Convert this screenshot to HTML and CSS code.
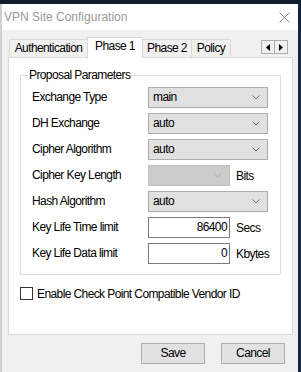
FILE: index.html
```html
<!DOCTYPE html>
<html>
<head>
<meta charset="utf-8">
<link rel="stylesheet" href="styles.css">
</head>
<body>
<div class="window">
  <div class="titlebar">
    <span class="title">VPN Site Configuration</span>
    <svg class="close" width="11" height="11" viewBox="0 0 11 11"><path d="M0.5 0.5L10.5 10.5M10.5 0.5L0.5 10.5" stroke="#8a8a8a" stroke-width="1"/></svg>
  </div>
  <div class="body">
    <div class="tabs">
      <div class="tab t-auth">Authentication</div>
      <div class="tab t-p1 active">Phase 1</div>
      <div class="tab t-p2">Phase 2</div>
      <div class="tab t-pol">Policy</div>
      <div class="scroller">
        <span class="sbtn"><svg width="4" height="7" viewBox="0 0 4 7"><path d="M4 0V7L0 3.5Z" fill="#000"/></svg></span>
        <span class="sbtn"><svg width="4" height="7" viewBox="0 0 4 7"><path d="M0 0V7L4 3.5Z" fill="#000"/></svg></span>
      </div>
    </div>
    <div class="panel">
      <fieldset class="group">
        <legend>Proposal Parameters</legend>
        <div class="row">
          <span class="label">Exchange Type</span>
          <div class="select"><span>main</span><svg class="chev" width="8" height="5" viewBox="0 0 8 5"><path d="M0.5 0.5L4 4L7.5 0.5" fill="none" stroke="#666" stroke-width="1"/></svg></div>
        </div>
        <div class="row">
          <span class="label">DH Exchange</span>
          <div class="select"><span>auto</span><svg class="chev" width="8" height="5" viewBox="0 0 8 5"><path d="M0.5 0.5L4 4L7.5 0.5" fill="none" stroke="#666" stroke-width="1"/></svg></div>
        </div>
        <div class="row">
          <span class="label">Cipher Algorithm</span>
          <div class="select"><span>auto</span><svg class="chev" width="8" height="5" viewBox="0 0 8 5"><path d="M0.5 0.5L4 4L7.5 0.5" fill="none" stroke="#666" stroke-width="1"/></svg></div>
        </div>
        <div class="row">
          <span class="label">Cipher Key Length</span>
          <div class="field">
            <div class="select short disabled"><span></span><svg class="chev" width="8" height="5" viewBox="0 0 8 5"><path d="M0.5 0.5L4 4L7.5 0.5" fill="none" stroke="#b5b5b5" stroke-width="1"/></svg></div>
            <span class="unit">Bits</span>
          </div>
        </div>
        <div class="row">
          <span class="label">Hash Algorithm</span>
          <div class="select"><span>auto</span><svg class="chev" width="8" height="5" viewBox="0 0 8 5"><path d="M0.5 0.5L4 4L7.5 0.5" fill="none" stroke="#666" stroke-width="1"/></svg></div>
        </div>
        <div class="row">
          <span class="label">Key Life Time limit</span>
          <div class="field">
            <div class="input">86400</div>
            <span class="unit">Secs</span>
          </div>
        </div>
        <div class="row">
          <span class="label">Key Life Data limit</span>
          <div class="field">
            <div class="input">0</div>
            <span class="unit">Kbytes</span>
          </div>
        </div>
      </fieldset>
      <div class="check"><span class="box"></span><span>Enable Check Point Compatible Vendor ID</span></div>
    </div>
    <div class="buttons">
      <div class="btn">Save</div>
      <div class="btn">Cancel</div>
    </div>
  </div>
</div>
</body>
</html>
```

FILE: styles.css
```css
* { box-sizing: border-box; }
html, body { margin: 0; padding: 0; }
body {
  width: 301px;
  height: 372px;
  overflow: hidden;
  background:
    linear-gradient(#0f1d2e, #0f1d2e) top left / 100% 4px no-repeat,
    linear-gradient(to right, #cfcfcf 2px, #14243a 2px);
  font-family: "Liberation Sans", Arial, sans-serif;
  font-size: 12px;
  letter-spacing: -0.6px;
  color: #000;
  white-space: nowrap;
}
.window {
  margin: 4px 0 0 2px;
  width: 296px;
  height: 368px;
  background: #f0f0f0;
}
.titlebar {
  height: 26px;
  background: #fff;
  display: flex;
  align-items: center;
  justify-content: space-between;
  padding: 0 8px 0 2px;
}
.title {
  font-family: "Liberation Sans", Arial, sans-serif;
  font-size: 12px;
  letter-spacing: 0;
  color: #9a9a9a;
}
.body {
  padding: 7px 0 0 6px;
}
.tabs {
  display: flex;
  align-items: flex-end;
  height: 20px;
  width: 285px;
  padding-left: 1px;
  position: relative;
  z-index: 1;
}
.tab {
  height: 18px;
  border: 1px solid #d9d9d9;
  border-bottom: none;
  background: #f0f0f0;
  text-align: center;
  line-height: 17px;
  margin-left: -1px;
}
.t-auth { width: 79px; margin-left: 0; }
.t-p1 { width: 56px; }
.t-p2 { width: 50px; }
.t-pol { width: 40px; }
.tab.active {
  height: 21px;
  background: #fff;
  margin-bottom: -1px;
  position: relative;
  z-index: 2;
  line-height: 16px;
}
.scroller {
  margin-left: auto;
  margin-right: 5px;
  align-self: flex-start;
  margin-top: 3px;
  display: flex;
}
.sbtn {
  width: 14px;
  height: 14px;
  border: 1px solid #adadad;
  background: #f0f0f0;
  display: flex;
  align-items: center;
  justify-content: center;
  margin-left: -1px;
}
.panel {
  width: 285px;
  height: 278px;
  border: 1px solid #d9d9d9;
  background: #fff;
  padding: 10px 11px 0 11px;
}
.group {
  margin: 0;
  border: 1px solid #dcdcdc;
  padding: 4px 11px 10px 11px;
  display: flex;
  flex-direction: column;
  gap: 5px;
}
.group legend {
  padding: 0 1px;
  margin-left: -4px;
  line-height: 15px;
}
.row {
  display: grid;
  grid-template-columns: 116px 1fr;
  align-items: center;
  height: 21px;
}
.label { line-height: 21px; }
.select {
  width: 120px;
  height: 21px;
  border: 1px solid #adadad;
  background: #e1e1e1;
  display: flex;
  align-items: center;
  justify-content: space-between;
  padding: 0 7px 0 4px;
  line-height: 19px;
}
.select.short { width: 82px; }
.select.disabled {
  background: #cccccc;
  border-color: #bfbfbf;
}
.field {
  display: flex;
  align-items: center;
}
.unit { margin-left: 6px; }
.input {
  width: 82px;
  height: 21px;
  border: 1px solid #7a7a7a;
  background: #fff;
  text-align: right;
  padding-right: 2px;
  line-height: 19px;
}
.check {
  display: flex;
  align-items: center;
  margin-top: 12px;
  height: 13px;
}
.box {
  width: 13px;
  height: 13px;
  border: 1px solid #333;
  background: #fff;
  margin-right: 4px;
}
.buttons {
  width: 285px;
  display: flex;
  justify-content: flex-end;
  gap: 16px;
  padding-right: 8px;
  margin-top: 8px;
}
.btn {
  width: 64px;
  height: 21px;
  border: 1px solid #adadad;
  background: #e1e1e1;
  text-align: center;
  line-height: 19px;
}
```
